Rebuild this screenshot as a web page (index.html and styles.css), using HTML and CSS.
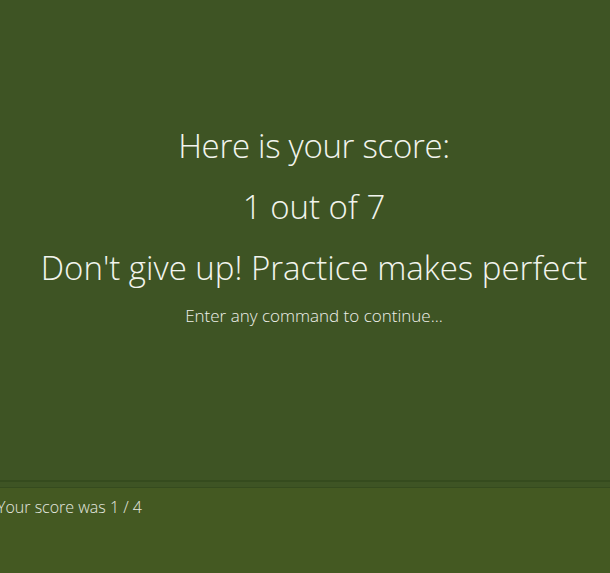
FILE: index.html
```html
<!DOCTYPE html>
<html><head><meta charset="utf-8"><link rel="stylesheet" href="styles.css"></head>
<body>
<main class="result">
  <div class="line">Here is your score:</div>
  <div class="line">1 out of 7</div>
  <div class="line">Don't give up! Practice makes perfect</div>
  <div class="hint">Enter any command to continue...</div>
</main>
<div class="divider"></div>
<footer class="console">
  <div class="log">Your score was 1 / 4</div>
</footer>
</body></html>
```
FILE: styles.css
```css
html,body{margin:0;height:100%}
body{
  background:#445922;
  font-family:"Open Sans","Liberation Sans",sans-serif;
  font-weight:300;
  color:#f2f4ee;
  overflow:hidden;
}
.result{
  height:480px;
  box-sizing:border-box;
  background:#3e5424;
  padding:115px 0 0 18px;
  text-align:center;
}
.line{
  font-size:33px;
  line-height:61px;
  white-space:nowrap;
}
.line:first-child{
  letter-spacing:-0.3px;
}
.hint{
  margin-top:6px;
  font-size:17px;
  line-height:24px;
  color:#eef0ea;
}
.divider{
  height:5px;
  background:#3e5424;
  border-top:2px solid #354b1e;
  border-bottom:1px solid #354b1e;
}
.console{
  padding-top:7px;
}
.log{
  margin-left:-3px;
  font-size:16px;
  line-height:24px;
  color:#e6e9e0;
  white-space:nowrap;
}
```
